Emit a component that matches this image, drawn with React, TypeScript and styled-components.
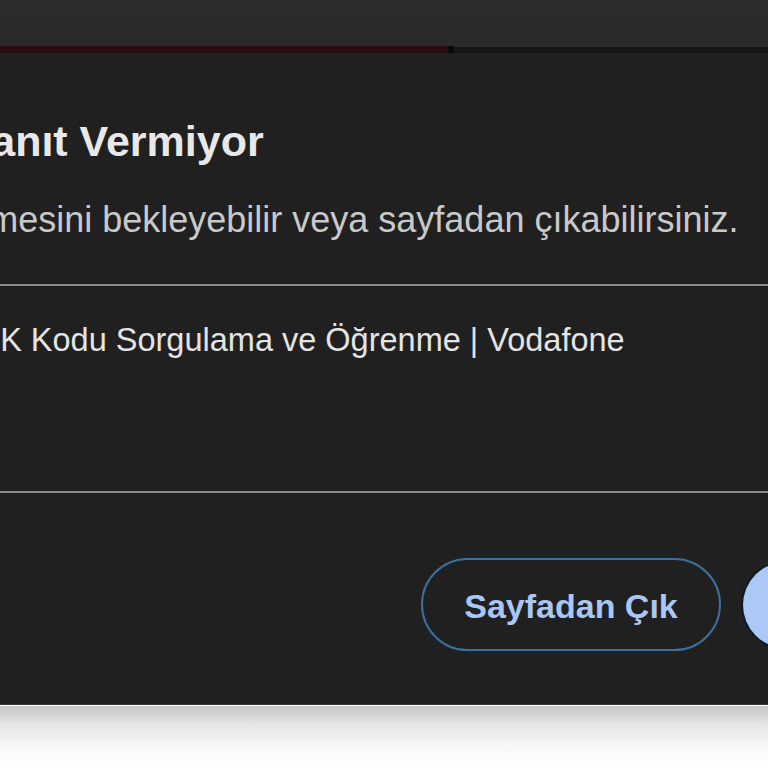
import React from 'react';
import styled, { createGlobalStyle } from 'styled-components';

const GlobalStyle = createGlobalStyle`
  html, body {
    margin: 0;
    padding: 0;
    background: #ffffff;
    overflow: hidden;
  }
  body {
    font-family: "Liberation Sans", Arial, sans-serif;
  }
`;

const Screen = styled.div`
  width: 768px;
  height: 768px;
  display: flex;
  flex-direction: column;
  overflow: hidden;
  background: linear-gradient(#c6c6c6 0px, #e4e4e4 18px, #f8f8f8 40px, #ffffff 62px);
  background-position: 0 706px;
  background-repeat: no-repeat;
  background-size: 100% 62px;
`;

const BrowserTop = styled.div`
  height: 46px;
  flex-shrink: 0;
  background: linear-gradient(#2c2c2c, #2a2a2a);
`;

const LoadBar = styled.div`
  height: 7px;
  flex-shrink: 0;
  display: flex;
`;

const LoadFill = styled.div<{ $width: number; $color: string }>`
  width: ${p => p.$width}px;
  flex-shrink: 0;
  background: ${p => p.$color};
`;

const LoadRest = styled.div`
  flex: 1;
  background: #161616;
  border-top: 1px solid #2e2e2e;
`;

const Dialog = styled.div`
  height: 652px;
  flex-shrink: 0;
  background: #202020;
  display: flex;
  flex-direction: column;
  padding-top: 63px;
  box-sizing: border-box;
  border-bottom: 1px solid #3a3a3a;
`;

const Title = styled.h2<{ $cut: number }>`
  margin: 0 0 0 ${p => p.$cut}px;
  font-size: 43px;
  line-height: 50px;
  font-weight: 700;
  color: #e8e8e8;
  white-space: nowrap;
`;

const Message = styled.p<{ $cut: number }>`
  margin: 32px 0 0 ${p => p.$cut}px;
  font-size: 36px;
  line-height: 44px;
  color: #c9c9c9;
  white-space: nowrap;
`;

const Divider = styled.hr<{ $top: number }>`
  margin: ${p => p.$top}px 0 0;
  border: none;
  height: 2px;
  background: #8c8c8c;
  flex-shrink: 0;
`;

const PageBox = styled.div`
  height: 205px;
  box-sizing: border-box;
  padding-top: 34px;
`;

const PageName = styled.div<{ $cut: number }>`
  margin-left: ${p => p.$cut}px;
  font-size: 32.5px;
  line-height: 40px;
  color: #e4e4e4;
  white-space: nowrap;
`;

const Actions = styled.div`
  margin-top: 65px;
  display: flex;
  gap: 22px;
  padding-left: 421px;
`;

const OutlineButton = styled.button`
  width: 300px;
  height: 93px;
  flex-shrink: 0;
  border-radius: 47px;
  border: 2px solid #3d6f9c;
  background: transparent;
  color: #a9c6f5;
  font-family: "Liberation Sans", Arial, sans-serif;
  font-weight: 700;
  font-size: 34px;
  padding: 4px 0 0;
  cursor: pointer;
`;

const FilledButton = styled.button`
  width: 200px;
  height: 86px;
  margin-top: 4px;
  flex-shrink: 0;
  border-radius: 43px;
  border: none;
  box-shadow: 0 0 0 2px #0e1a28;
  background: #aec8f6;
  color: #062e6f;
  font-family: "Liberation Sans", Arial, sans-serif;
  font-weight: 700;
  font-size: 34px;
  cursor: pointer;
`;

export default function App() {
  return (
    <>
      <GlobalStyle />
      <Screen>
        <BrowserTop />
        <LoadBar>
          <LoadFill $width={448} $color="#2b0c13" />
          <LoadFill $width={6} $color="#0a0a0a" />
          <LoadRest />
        </LoadBar>
        <Dialog>
          <Title $cut={-161}>Sayfa Yanıt Vermiyor</Title>
          <Message $cut={-302}>Sayfanın yanıt vermesini bekleyebilir veya sayfadan çıkabilirsiniz.</Message>
          <Divider $top={42} />
          <PageBox>
            <PageName $cut={-45}>PUK Kodu Sorgulama ve Öğrenme | Vodafone</PageName>
          </PageBox>
          <Divider $top={0} />
          <Actions>
            <OutlineButton>Sayfadan Çık</OutlineButton>
            <FilledButton>Bekle</FilledButton>
          </Actions>
        </Dialog>
      </Screen>
    </>
  );
}
